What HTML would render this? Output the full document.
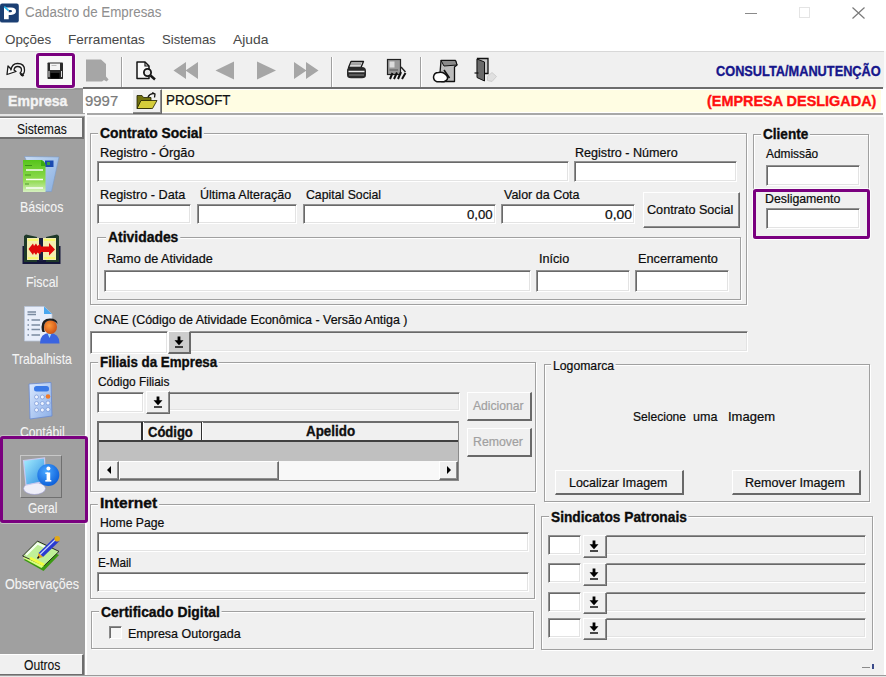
<!DOCTYPE html>
<html><head><meta charset="utf-8"><style>
html,body{margin:0;padding:0;}
body{width:886px;height:677px;overflow:hidden;position:relative;background:#fff;font-family:"Liberation Sans", sans-serif;}
body>div{position:absolute;}
.t{white-space:pre;transform-origin:0 0;-webkit-text-stroke:0.3px currentColor;}
.sk{box-sizing:border-box;border-top:1px solid #909090;border-left:1px solid #909090;border-right:1px solid #fff;border-bottom:1px solid #fff;box-shadow:inset 1px 1px #696969, inset -1px -1px #e3e3e3;}
.rs{box-sizing:border-box;border-top:1px solid #fff;border-left:1px solid #fff;border-right:1px solid #696969;border-bottom:1px solid #696969;box-shadow:inset -1px -1px #8e8e8e;}
.rs2{box-sizing:border-box;border-top:1px solid #fff;border-left:1px solid #fff;border-right:2px solid #696969;border-bottom:2px solid #696969;}
.gb{box-sizing:border-box;border:1px solid #a0a0a0;box-shadow:inset 1px 1px #fff, 1px 1px #fff;}
</style></head><body>
<div style="left:0px;top:0px;width:886px;height:51px;background:#fff"></div>
<div class="t" style="left:24.73px;top:6.07px;font-size:13.91px;line-height:13.91px;font-weight:400;color:#8f8f8f;transform:scaleX(0.9591);-webkit-text-stroke:0.05px #8f8f8f">Cadastro de Empresas</div>
<div style="left:745px;top:13px;width:12px;height:1.2px;background:#8a8a8a"></div>
<div style="left:799px;top:7px;width:11px;height:11px;border:1px solid #e4e4e4;box-sizing:border-box"></div>
<svg style="position:absolute;left:852px;top:7px" width="13" height="12" viewBox="0 0 13 12"><path d="M0.5 0.5 L12.5 11.5 M12.5 0.5 L0.5 11.5" stroke="#7a7a7a" stroke-width="1.2"/></svg>
<div class="t" style="left:5.26px;top:33.37px;font-size:13.33px;line-height:13.33px;font-weight:400;color:#4a4a4a;transform:scaleX(1.0041);-webkit-text-stroke:0.05px #4a4a4a">Opções</div>
<div class="t" style="left:68.01px;top:33.37px;font-size:13.33px;line-height:13.33px;font-weight:400;color:#4a4a4a;transform:scaleX(1.0174);-webkit-text-stroke:0.05px #4a4a4a">Ferramentas</div>
<div class="t" style="left:161.68px;top:33.37px;font-size:13.33px;line-height:13.33px;font-weight:400;color:#4a4a4a;transform:scaleX(0.9815);-webkit-text-stroke:0.05px #4a4a4a">Sistemas</div>
<div class="t" style="left:232.70px;top:33.37px;font-size:13.33px;line-height:13.33px;font-weight:400;color:#4a4a4a;transform:scaleX(1.0394);-webkit-text-stroke:0.05px #4a4a4a">Ajuda</div>
<div style="left:0px;top:51px;width:885px;height:37px;background:#f0f0f0;border-top:1px solid #d8d8d8;box-sizing:border-box"></div>
<div style="left:884px;top:51px;width:2px;height:37px;background:#fafafa"></div>
<div style="left:121px;top:57px;width:1px;height:30px;background:#a0a0a0;box-shadow:1px 0 #fff"></div>
<div style="left:331px;top:57px;width:1px;height:30px;background:#a0a0a0;box-shadow:1px 0 #fff"></div>
<div style="left:420px;top:57px;width:1px;height:30px;background:#a0a0a0;box-shadow:1px 0 #fff"></div>
<div class="t" style="left:715.89px;top:63.73px;font-size:14.20px;line-height:14.20px;font-weight:700;color:#16168c;transform:scaleX(0.8996);-webkit-text-stroke:0.35px #16168c">CONSULTA/MANUTENÇÃO</div>
<div style="left:0px;top:87.5px;width:883px;height:2.3px;background:#949494"></div>
<div style="left:0px;top:89.7px;width:83.5px;height:24.3px;background:#a0a0a0;border-right:1px solid #8a8a8a;box-sizing:border-box"></div>
<div class="t" style="left:8.36px;top:94.67px;font-size:13.91px;line-height:13.91px;font-weight:700;color:#f4f4f4;transform:scaleX(1.0114);-webkit-text-stroke:0.35px #f4f4f4">Empresa</div>
<div style="left:83px;top:87px;width:800px;height:28px;background:#fff;border-top:2px solid #6d6d6d;border-bottom:2px solid #a8a8a8;box-sizing:border-box"></div>
<div class="t" style="left:84.80px;top:94.31px;font-size:14.93px;line-height:14.93px;font-weight:400;color:#7a7a7a;transform:scaleX(0.9993);-webkit-text-stroke:0.22px #7a7a7a">9997</div>
<div class="rs" style="left:132px;top:89px;width:30px;height:25px;background:#f0f0f0"></div>
<div style="left:161.5px;top:89.8px;width:719px;height:22.6px;background:#fffde3"></div>
<div class="t" style="left:165.83px;top:93.23px;font-size:14.78px;line-height:14.78px;font-weight:400;color:#111;transform:scaleX(0.9034);-webkit-text-stroke:0.22px #111">PROSOFT</div>
<div class="t" style="left:707.12px;top:94.43px;font-size:14.20px;line-height:14.20px;font-weight:700;color:#ff1010;transform:scaleX(1.0168);-webkit-text-stroke:0.35px #ff1010">(EMPRESA DESLIGADA)</div>
<div style="left:0px;top:116px;width:85px;height:559px;background:#a0a0a0"></div>
<div style="left:0px;top:114px;width:85px;height:2px;background:#e6e6e6"></div>
<div style="left:85px;top:113px;width:2px;height:562px;background:#fff"></div>
<div style="left:0;top:117px;width:84px;height:22px;background:#f0f0f0;border-top:1px solid #7a7a7a;border-right:2px solid #6d6d6d;border-bottom:2px solid #6d6d6d;box-sizing:border-box;box-shadow:inset 0 1px #fff"></div>
<div class="t" style="left:16.72px;top:121.83px;font-size:14.20px;line-height:14.20px;font-weight:400;color:#111;transform:scaleX(0.8517);-webkit-text-stroke:0.1px #111">Sistemas</div>
<div style="left:0;top:654px;width:84px;height:21px;background:#f0f0f0;border-top:1px solid #fff;border-right:2px solid #6d6d6d;border-bottom:1px solid #6d6d6d;box-sizing:border-box"></div>
<div class="t" style="left:24.11px;top:658.13px;font-size:14.20px;line-height:14.20px;font-weight:400;color:#111;transform:scaleX(0.8552);-webkit-text-stroke:0.1px #111">Outros</div>
<div class="t" style="left:20.41px;top:199.83px;font-size:14.20px;line-height:14.20px;font-weight:400;color:#f4f4f4;transform:scaleX(0.8719);-webkit-text-stroke:0.1px #f4f4f4">Básicos</div>
<div class="t" style="left:26.01px;top:275.13px;font-size:14.20px;line-height:14.20px;font-weight:400;color:#f4f4f4;transform:scaleX(0.8726);-webkit-text-stroke:0.1px #f4f4f4">Fiscal</div>
<div class="t" style="left:11.66px;top:351.73px;font-size:14.20px;line-height:14.20px;font-weight:400;color:#f4f4f4;transform:scaleX(0.8590);-webkit-text-stroke:0.1px #f4f4f4">Trabalhista</div>
<div class="t" style="left:19.69px;top:425.33px;font-size:14.20px;line-height:14.20px;font-weight:400;color:#f4f4f4;transform:scaleX(0.8591);-webkit-text-stroke:0.1px #f4f4f4">Contábil</div>
<div class="t" style="left:27.70px;top:501.13px;font-size:14.20px;line-height:14.20px;font-weight:400;color:#f4f4f4;transform:scaleX(0.8450);-webkit-text-stroke:0.1px #f4f4f4">Geral</div>
<div class="t" style="left:5.20px;top:577.13px;font-size:14.20px;line-height:14.20px;font-weight:400;color:#f4f4f4;transform:scaleX(0.8865);-webkit-text-stroke:0.1px #f4f4f4">Observações</div>
<div style="left:87px;top:115px;width:797px;height:560px;background:#f0f0f0"></div>
<div style="left:87px;top:115px;width:797px;height:1.5px;background:#fafafa"></div>
<div style="left:0px;top:675px;width:886px;height:1px;background:#9a9a9a"></div>
<div style="left:0px;top:676px;width:886px;height:1px;background:#e8e8e8"></div>
<div class="gb" style="left:90px;top:133px;width:657px;height:172px"></div>
<div class="t" style="left:100.15px;top:126.00px;font-size:14.35px;line-height:14.35px;font-weight:700;color:#0c0c0c;transform:scaleX(0.9658);-webkit-text-stroke:0.35px #0c0c0c;background:#f0f0f0;box-shadow:-2px 0 #f0f0f0,1.5px 0 #f0f0f0">Contrato Social</div>
<div class="t" style="left:100.28px;top:145.99px;font-size:13.19px;line-height:13.19px;font-weight:400;color:#0c0c0c;transform:scaleX(0.9703);-webkit-text-stroke:0.22px #0c0c0c">Registro - Órgão</div>
<div class="sk" style="left:97px;top:161px;width:472px;height:21px;background:#fff"></div>
<div class="t" style="left:574.69px;top:146.19px;font-size:13.19px;line-height:13.19px;font-weight:400;color:#0c0c0c;transform:scaleX(0.9538);-webkit-text-stroke:0.22px #0c0c0c">Registro - Número</div>
<div class="sk" style="left:573.5px;top:161px;width:163.5px;height:21px;background:#fff"></div>
<div class="t" style="left:100.29px;top:188.49px;font-size:13.19px;line-height:13.19px;font-weight:400;color:#0c0c0c;transform:scaleX(0.9614);-webkit-text-stroke:0.22px #0c0c0c">Registro - Data</div>
<div class="sk" style="left:97px;top:203.5px;width:94px;height:20.5px;background:#fff"></div>
<div class="t" style="left:199.52px;top:188.49px;font-size:13.19px;line-height:13.19px;font-weight:400;color:#0c0c0c;transform:scaleX(0.9502);-webkit-text-stroke:0.22px #0c0c0c">Última Alteração</div>
<div class="sk" style="left:196.5px;top:203.5px;width:100.5px;height:20.5px;background:#fff"></div>
<div class="t" style="left:305.89px;top:188.49px;font-size:13.19px;line-height:13.19px;font-weight:400;color:#0c0c0c;transform:scaleX(0.9310);-webkit-text-stroke:0.22px #0c0c0c">Capital Social</div>
<div class="sk" style="left:302.5px;top:203.5px;width:193.0px;height:20.5px;background:#fff"></div>
<div class="t" style="left:466.70px;top:208.39px;font-size:13.19px;line-height:13.19px;font-weight:400;color:#0c0c0c;transform:scaleX(1.0002);-webkit-text-stroke:0.22px #0c0c0c">0,00</div>
<div class="t" style="left:504.40px;top:188.49px;font-size:13.19px;line-height:13.19px;font-weight:400;color:#0c0c0c;transform:scaleX(0.9484);-webkit-text-stroke:0.22px #0c0c0c">Valor da Cota</div>
<div class="sk" style="left:500.5px;top:203.5px;width:134.5px;height:20.5px;background:#fff"></div>
<div class="t" style="left:604.99px;top:208.39px;font-size:13.19px;line-height:13.19px;font-weight:400;color:#0c0c0c;transform:scaleX(1.0486);-webkit-text-stroke:0.22px #0c0c0c">0,00</div>
<div class="rs" style="left:642.5px;top:192px;width:97.5px;height:36px;background:#f0f0f0"></div>
<div class="t" style="left:646.77px;top:203.39px;font-size:13.19px;line-height:13.19px;font-weight:400;color:#0c0c0c;transform:scaleX(0.9573);-webkit-text-stroke:0.22px #0c0c0c">Contrato Social</div>
<div class="gb" style="left:97px;top:236.5px;width:644px;height:63.0px"></div>
<div class="t" style="left:107.72px;top:230.40px;font-size:14.35px;line-height:14.35px;font-weight:700;color:#0c0c0c;transform:scaleX(0.9700);-webkit-text-stroke:0.35px #0c0c0c;background:#f0f0f0;box-shadow:-2px 0 #f0f0f0,1.5px 0 #f0f0f0">Atividades</div>
<div class="t" style="left:106.99px;top:252.19px;font-size:13.19px;line-height:13.19px;font-weight:400;color:#0c0c0c;transform:scaleX(0.9563);-webkit-text-stroke:0.22px #0c0c0c">Ramo de Atividade</div>
<div class="sk" style="left:104px;top:269.5px;width:427px;height:22.5px;background:#fff"></div>
<div class="t" style="left:538.86px;top:251.79px;font-size:13.19px;line-height:13.19px;font-weight:400;color:#0c0c0c;transform:scaleX(0.9579);-webkit-text-stroke:0.22px #0c0c0c">Início</div>
<div class="sk" style="left:536px;top:269.5px;width:93.5px;height:22.5px;background:#fff"></div>
<div class="t" style="left:637.78px;top:251.79px;font-size:13.19px;line-height:13.19px;font-weight:400;color:#0c0c0c;transform:scaleX(0.9643);-webkit-text-stroke:0.22px #0c0c0c">Encerramento</div>
<div class="sk" style="left:635px;top:269.5px;width:93.5px;height:22.5px;background:#fff"></div>
<div class="gb" style="left:753px;top:134px;width:116px;height:105px"></div>
<div class="t" style="left:763.36px;top:127.40px;font-size:14.35px;line-height:14.35px;font-weight:700;color:#0c0c0c;transform:scaleX(0.9470);-webkit-text-stroke:0.35px #0c0c0c;background:#f0f0f0;box-shadow:-2px 0 #f0f0f0,1.5px 0 #f0f0f0">Cliente</div>
<div class="t" style="left:765.70px;top:146.79px;font-size:13.19px;line-height:13.19px;font-weight:400;color:#0c0c0c;transform:scaleX(0.9020);-webkit-text-stroke:0.22px #0c0c0c">Admissão</div>
<div class="sk" style="left:765.5px;top:165px;width:94.5px;height:21px;background:#fff"></div>
<div class="t" style="left:764.71px;top:191.99px;font-size:13.19px;line-height:13.19px;font-weight:400;color:#0c0c0c;transform:scaleX(0.9342);-webkit-text-stroke:0.22px #0c0c0c">Desligamento</div>
<div class="sk" style="left:765.5px;top:208px;width:94.5px;height:21px;background:#fff"></div>
<div class="t" style="left:93.78px;top:313.39px;font-size:13.19px;line-height:13.19px;font-weight:400;color:#0c0c0c;transform:scaleX(0.9441);-webkit-text-stroke:0.22px #0c0c0c">CNAE (Código de Atividade Econômica - Versão Antiga )</div>
<div class="sk" style="left:90px;top:331px;width:78px;height:22.5px;background:#fff"></div>
<div class="sk" style="left:189px;top:331px;width:559px;height:21px;background:#f0f0f0"></div>
<div class="rs2" style="left:167.5px;top:331px;width:23.5px;height:23px;background:#cdcdcd"></div>
<div class="gb" style="left:90px;top:361.5px;width:446px;height:130.5px"></div>
<div class="t" style="left:99.90px;top:354.80px;font-size:14.35px;line-height:14.35px;font-weight:700;color:#0c0c0c;transform:scaleX(0.9303);-webkit-text-stroke:0.35px #0c0c0c;background:#f0f0f0;box-shadow:-2px 0 #f0f0f0,1.5px 0 #f0f0f0">Filiais da Empresa</div>
<div class="t" style="left:98.30px;top:374.69px;font-size:13.19px;line-height:13.19px;font-weight:400;color:#0c0c0c;transform:scaleX(0.9026);-webkit-text-stroke:0.22px #0c0c0c">Código Filiais</div>
<div class="sk" style="left:97px;top:392px;width:46.5px;height:20.5px;background:#fff"></div>
<div class="sk" style="left:168px;top:392px;width:292px;height:18.5px;background:#f0f0f0"></div>
<div class="rs" style="left:146px;top:391px;width:23.80000000000001px;height:23px;background:#f0f0f0"></div>
<div style="left:97px;top:420.5px;width:362px;height:60.5px;border:1px solid #8a8a8a;border-top:2px solid #6d6d6d;border-left:2px solid #6d6d6d;box-sizing:border-box;background:#f0f0f0"></div>
<div style="left:99px;top:440px;width:359px;height:21px;background:#c0c0c0;border-top:2px solid #404040;box-sizing:border-box"></div>
<div style="left:141px;top:422px;width:1.5px;height:18px;background:#303030;box-shadow:1px 0 #fff"></div>
<div style="left:200.5px;top:422px;width:1.5px;height:18px;background:#303030;box-shadow:1px 0 #fff"></div>
<div class="t" style="left:148.48px;top:424.80px;font-size:14.35px;line-height:14.35px;font-weight:700;color:#111;transform:scaleX(0.9072);-webkit-text-stroke:0.35px #111">Código</div>
<div class="t" style="left:305.83px;top:424.40px;font-size:14.35px;line-height:14.35px;font-weight:700;color:#111;transform:scaleX(0.9330);-webkit-text-stroke:0.35px #111">Apelido</div>
<div style="left:99px;top:461px;width:358px;height:19px;background:#f8f8f8"></div>
<div class="rs" style="left:99px;top:461px;width:20px;height:19px;background:#f0f0f0"></div>
<div class="rs" style="left:119px;top:461px;width:160px;height:19px;background:#f0f0f0"></div>
<div class="rs" style="left:438.5px;top:461px;width:19.5px;height:19px;background:#f0f0f0"></div>
<svg style="position:absolute;left:104px;top:464px" width="10" height="12"><path d="M7 2 L3 6 L7 10 Z" fill="#000"/></svg>
<svg style="position:absolute;left:444px;top:464px" width="10" height="12"><path d="M3 2 L7 6 L3 10 Z" fill="#000"/></svg>
<div class="rs2" style="left:467px;top:392px;width:64.5px;height:29px;background:#f0f0f0"></div>
<div class="t" style="left:473.20px;top:399.19px;font-size:13.19px;line-height:13.19px;font-weight:400;color:#a0a0a0;transform:scaleX(0.9195);-webkit-text-stroke:0.22px #a0a0a0">Adicionar</div>
<div class="rs2" style="left:467px;top:427.5px;width:64.5px;height:29.0px;background:#f0f0f0"></div>
<div class="t" style="left:472.72px;top:434.79px;font-size:13.19px;line-height:13.19px;font-weight:400;color:#a0a0a0;transform:scaleX(0.9335);-webkit-text-stroke:0.22px #a0a0a0">Remover</div>
<div class="gb" style="left:544px;top:364px;width:326px;height:138px"></div>
<div class="t" style="left:553.22px;top:358.99px;font-size:13.19px;line-height:13.19px;font-weight:400;color:#0c0c0c;transform:scaleX(0.9265);-webkit-text-stroke:0.22px #0c0c0c;background:#f0f0f0;box-shadow:-2px 0 #f0f0f0,1.5px 0 #f0f0f0">Logomarca</div>
<div class="t" style="left:632.52px;top:410.49px;font-size:13.19px;line-height:13.19px;font-weight:400;color:#0c0c0c;transform:scaleX(0.9153);-webkit-text-stroke:0.22px #0c0c0c">Selecione</div>
<div class="t" style="left:692.65px;top:410.49px;font-size:13.19px;line-height:13.19px;font-weight:400;color:#0c0c0c;transform:scaleX(0.9512);-webkit-text-stroke:0.22px #0c0c0c">uma</div>
<div class="t" style="left:727.73px;top:410.49px;font-size:13.19px;line-height:13.19px;font-weight:400;color:#0c0c0c;transform:scaleX(0.9864);-webkit-text-stroke:0.22px #0c0c0c">Imagem</div>
<div class="rs2" style="left:554.5px;top:469.7px;width:129.5px;height:25.80000000000001px;background:#f0f0f0"></div>
<div class="t" style="left:569.00px;top:475.89px;font-size:13.19px;line-height:13.19px;font-weight:400;color:#0c0c0c;transform:scaleX(0.9452);-webkit-text-stroke:0.22px #0c0c0c">Localizar Imagem</div>
<div class="rs2" style="left:731.5px;top:469.7px;width:129.5px;height:25.80000000000001px;background:#f0f0f0"></div>
<div class="t" style="left:745.49px;top:475.89px;font-size:13.19px;line-height:13.19px;font-weight:400;color:#0c0c0c;transform:scaleX(0.9551);-webkit-text-stroke:0.22px #0c0c0c">Remover Imagem</div>
<div class="gb" style="left:90px;top:503.5px;width:445px;height:95.5px"></div>
<div class="t" style="left:99.87px;top:496.30px;font-size:14.35px;line-height:14.35px;font-weight:700;color:#0c0c0c;transform:scaleX(1.0849);-webkit-text-stroke:0.35px #0c0c0c;background:#f0f0f0;box-shadow:-2px 0 #f0f0f0,1.5px 0 #f0f0f0">Internet</div>
<div class="t" style="left:100.03px;top:516.49px;font-size:13.19px;line-height:13.19px;font-weight:400;color:#0c0c0c;transform:scaleX(0.9235);-webkit-text-stroke:0.22px #0c0c0c">Home Page</div>
<div class="sk" style="left:97px;top:531.5px;width:432px;height:20.5px;background:#fff"></div>
<div class="t" style="left:98.06px;top:555.99px;font-size:13.19px;line-height:13.19px;font-weight:400;color:#0c0c0c;transform:scaleX(0.8875);-webkit-text-stroke:0.22px #0c0c0c">E-Mail</div>
<div class="sk" style="left:97px;top:572px;width:432px;height:20px;background:#fff"></div>
<div class="gb" style="left:91px;top:611px;width:443px;height:37.5px"></div>
<div class="t" style="left:101.24px;top:604.70px;font-size:14.35px;line-height:14.35px;font-weight:700;color:#0c0c0c;transform:scaleX(0.9685);-webkit-text-stroke:0.35px #0c0c0c;background:#f0f0f0;box-shadow:-2px 0 #f0f0f0,1.5px 0 #f0f0f0">Certificado Digital</div>
<div style="left:109px;top:626px;width:13px;height:13px;box-sizing:border-box;border-top:1px solid #8a8a8a;border-left:1px solid #8a8a8a;border-right:1px solid #fff;border-bottom:1px solid #fff;box-shadow:inset 1px 1px #6d6d6d;background:#f6f6f6"></div>
<div class="t" style="left:128.30px;top:626.99px;font-size:13.19px;line-height:13.19px;font-weight:400;color:#0c0c0c;transform:scaleX(0.9486);-webkit-text-stroke:0.22px #0c0c0c">Empresa Outorgada</div>
<div class="gb" style="left:540.5px;top:516px;width:332.0px;height:133.5px"></div>
<div class="t" style="left:551.13px;top:509.60px;font-size:14.35px;line-height:14.35px;font-weight:700;color:#0c0c0c;transform:scaleX(0.9574);-webkit-text-stroke:0.35px #0c0c0c;background:#f0f0f0;box-shadow:-2px 0 #f0f0f0,1.5px 0 #f0f0f0">Sindicatos Patronais</div>
<div class="sk" style="left:548px;top:535px;width:33px;height:20px;background:#fff"></div>
<div class="sk" style="left:605px;top:535px;width:261px;height:20px;background:#f0f0f0"></div>
<div class="rs" style="left:582.5px;top:535px;width:24.799999999999955px;height:23px;background:#f0f0f0"></div>
<div class="sk" style="left:548px;top:563px;width:33px;height:20px;background:#fff"></div>
<div class="sk" style="left:605px;top:563px;width:261px;height:20px;background:#f0f0f0"></div>
<div class="rs" style="left:582.5px;top:563px;width:24.799999999999955px;height:23px;background:#f0f0f0"></div>
<div class="sk" style="left:548px;top:591.5px;width:33px;height:20.0px;background:#fff"></div>
<div class="sk" style="left:605px;top:591.5px;width:261px;height:20.0px;background:#f0f0f0"></div>
<div class="rs" style="left:582.5px;top:591.5px;width:24.799999999999955px;height:22.5px;background:#f0f0f0"></div>
<div class="sk" style="left:548px;top:617.5px;width:33px;height:20.0px;background:#fff"></div>
<div class="sk" style="left:605px;top:617.5px;width:261px;height:20.0px;background:#f0f0f0"></div>
<div class="rs" style="left:582.5px;top:617.5px;width:24.799999999999955px;height:22.5px;background:#f0f0f0"></div>
<div style="left:862px;top:667px;width:8px;height:1px;background:#8a8a8a"></div>
<div style="left:872px;top:664px;width:2px;height:5px;background:#3b4a8a"></div>
<svg style="position:absolute;left:174px;top:336px" width="10" height="12" viewBox="0 0 10 12"><path d="M3.6 0.6 H6.4 V4.2 H9.5 L5 9.2 L0.5 4.2 H3.6 Z" fill="#000"/><rect x="1" y="10.3" width="8" height="1.4" fill="#000"/></svg>
<svg style="position:absolute;left:152.5px;top:396px" width="10" height="12" viewBox="0 0 10 12"><path d="M3.6 0.6 H6.4 V4.2 H9.5 L5 9.2 L0.5 4.2 H3.6 Z" fill="#000"/><rect x="1" y="10.3" width="8" height="1.4" fill="#000"/></svg>
<svg style="position:absolute;left:589px;top:539.8px" width="10" height="12" viewBox="0 0 10 12"><path d="M3.6 0.6 H6.4 V4.2 H9.5 L5 9.2 L0.5 4.2 H3.6 Z" fill="#000"/><rect x="1" y="10.3" width="8" height="1.4" fill="#000"/></svg>
<svg style="position:absolute;left:589px;top:567.8px" width="10" height="12" viewBox="0 0 10 12"><path d="M3.6 0.6 H6.4 V4.2 H9.5 L5 9.2 L0.5 4.2 H3.6 Z" fill="#000"/><rect x="1" y="10.3" width="8" height="1.4" fill="#000"/></svg>
<svg style="position:absolute;left:589px;top:596.3px" width="10" height="12" viewBox="0 0 10 12"><path d="M3.6 0.6 H6.4 V4.2 H9.5 L5 9.2 L0.5 4.2 H3.6 Z" fill="#000"/><rect x="1" y="10.3" width="8" height="1.4" fill="#000"/></svg>
<svg style="position:absolute;left:589px;top:622.3px" width="10" height="12" viewBox="0 0 10 12"><path d="M3.6 0.6 H6.4 V4.2 H9.5 L5 9.2 L0.5 4.2 H3.6 Z" fill="#000"/><rect x="1" y="10.3" width="8" height="1.4" fill="#000"/></svg>
<div style="left:35.5px;top:53.3px;width:39px;height:34.3px;border:3.8px solid #7a007f;border-radius:3px;box-sizing:border-box;background:#f8f8f8;box-shadow:0 0 0 1px rgba(255,255,255,.6)"></div>
<div style="left:-0.5px;top:436.3px;width:88px;height:87.2px;border:3.5px solid #7a007f;border-radius:3px;box-sizing:border-box;box-shadow:0 0 0 1px rgba(255,255,255,.35)"></div>
<div style="left:752.5px;top:189px;width:117.3px;height:49.5px;border:3.8px solid #7a007f;border-radius:3px;box-sizing:border-box;box-shadow:0 0 0 1px rgba(255,255,255,.8)"></div>
<div style="left:20px;top:455px;width:42px;height:43px;box-sizing:border-box;border-top:1px solid #c8c8c8;border-left:1px solid #c8c8c8;border-right:1px solid #707070;border-bottom:1px solid #707070"></div>
<svg style="position:absolute;left:0;top:0" width="886" height="677" viewBox="0 0 886 677">
<defs>
<linearGradient id="gg" x1="0" y1="0" x2="0" y2="1"><stop offset="0" stop-color="#56c41a"/><stop offset="0.65" stop-color="#92dc52"/><stop offset="1" stop-color="#d6f0c0"/></linearGradient>
<linearGradient id="bg1" x1="0" y1="0" x2="1" y2="1"><stop offset="0" stop-color="#c8dcf4"/><stop offset="1" stop-color="#88aee0"/></linearGradient>
<linearGradient id="scr" x1="0" y1="0" x2="1" y2="1"><stop offset="0" stop-color="#a8f0ff"/><stop offset="1" stop-color="#2a8ae0"/></linearGradient>
<linearGradient id="calc" x1="0" y1="0" x2="1" y2="1"><stop offset="0" stop-color="#dceaff"/><stop offset="1" stop-color="#8aaee8"/></linearGradient>
<radialGradient id="info" cx="0.4" cy="0.35" r="0.7"><stop offset="0" stop-color="#4aa8ff"/><stop offset="1" stop-color="#0a5cd8"/></radialGradient>
<radialGradient id="head" cx="0.4" cy="0.4" r="0.7"><stop offset="0" stop-color="#ff9a3a"/><stop offset="1" stop-color="#c84a10"/></radialGradient>
</defs>
<!-- Basicos -->
<path d="M24.5 156.5 L59 157 L51.5 191.5 L40 191.5 Z" fill="url(#bg1)" stroke="#7a9ac8" stroke-width="0.6"/>
<rect x="45" y="160.5" width="8.5" height="6.5" fill="#1a4ab0"/>
<rect x="47" y="162" width="3" height="3" fill="#3a9a4a"/>
<path d="M23 160 H41 Q45 161 45.5 166 V192 H23 Z" fill="url(#gg)"/>
<path d="M41 160 Q45 161 45.5 166 L41 166 Z" fill="#3aaa10"/>
<path d="M26 170 H43 M26 179.5 H43 M26 188 H43" stroke="#fff" stroke-width="1.6" opacity="0.95"/>
<path d="M25 165.5 H32 M25 175 H31 M25 184 H29" stroke="#2a7a10" stroke-width="1.2" opacity="0.7"/>
<!-- Fiscal -->
<rect x="22.5" y="246" width="38" height="18" fill="#14163a"/>
<path d="M24 236 L26 234.5 L37 237 L37 262 L24 262 Z" fill="#1f3a2a"/>
<path d="M46 237 L57 234.5 L59 236 L59 262 L46 262 Z" fill="#1f3a2a"/>
<path d="M27 238 H39 V260 H27 Z" fill="#f4eeb0"/>
<path d="M43 238 H56 V260 H43 Z" fill="#f4eeb0"/>
<rect x="39" y="238" width="4" height="23" fill="#1a1e40"/>
<path d="M28 240 H38 M44 240 H55 M28 258 H38 M44 258 H55" stroke="#f8f870" stroke-width="2"/>
<path d="M28.5 249 L33 243.5 L34 246 L36 243.5 L37.5 246 L40 244 L41 246.5 L49 246.5 L49 243 L55 249.5 L49 255.5 L49 252 L41 252 L40 254.5 L37.5 252.5 L36 255 L34 252.5 L33 255 Z" fill="#e00808"/>
<!-- Trabalhista -->
<path d="M24.5 306.5 H44 L52 314 V341 H24.5 Z" fill="#e8eefa" stroke="#b8c4d8" stroke-width="0.8"/>
<path d="M44 306.5 V314 H52 Z" fill="#4aa8f0"/>
<path d="M27.5 312 H36 M27.5 314.5 H36" stroke="#7a8aa0" stroke-width="1.3"/>
<path d="M27.5 320 H29 M31.5 320 H40 M27.5 325 H29 M31.5 325 H40 M27.5 329.5 H29 M31.5 329.5 H40 M27.5 335 H29 M31.5 335 H40" stroke="#7a8aa0" stroke-width="1.4"/>
<path d="M40 343.5 Q40 333 49.5 333 Q59.5 333 59.5 343.5 Z" fill="#3a64e0"/>
<path d="M47.5 333.5 L49.5 338 L51.5 333.5 Z" fill="#a8e0ff"/>
<ellipse cx="50.5" cy="327" rx="6.5" ry="7" fill="url(#head)"/>
<path d="M41.5 327 Q41.5 318.5 50 318.5 Q57.5 318.5 57.5 324 Q55 320.5 50 320.5 Q44.5 320.5 44 327 Q44 331 45 332 L42.5 332 Q41.5 330 41.5 327Z" fill="#1e1e1e"/>
<!-- Contabil -->
<path d="M29 384 L51 382.5 L52 416 L30 419 Z" fill="url(#calc)" stroke="#6a8ad0" stroke-width="0.8"/>
<rect x="34" y="386" width="15" height="5.5" rx="2.5" fill="#3a7ae8"/>
<g fill="#eef4ff" stroke="#6a8ad0" stroke-width="0.6">
<circle cx="36.5" cy="397" r="2"/><circle cx="42.3" cy="397" r="2"/>
<circle cx="36.5" cy="403.5" r="2"/><circle cx="42.3" cy="403.5" r="2"/><circle cx="48" cy="403" r="2"/>
<circle cx="36.5" cy="410" r="2"/><circle cx="42.3" cy="410" r="2"/><circle cx="48" cy="409.5" r="2"/>
</g>
<circle cx="48" cy="396.5" r="2.3" fill="#f07a2a"/>
<!-- Geral -->
<ellipse cx="34.5" cy="488.5" rx="11" ry="6" fill="#eeeef8" stroke="#9a9ad0" stroke-width="0.6"/>
<path d="M23.5 460.5 L44.5 458 L45.5 481 L26 485 Z" fill="url(#scr)" stroke="#c8c8f0" stroke-width="1.2"/>
<circle cx="48.3" cy="475" r="11" fill="url(#info)"/>
<rect x="46.6" y="472.5" width="3.6" height="8.5" fill="#fff"/>
<rect x="45.3" y="480" width="6" height="1.6" fill="#fff"/>
<rect x="45.3" y="472.5" width="3" height="1.4" fill="#fff"/>
<circle cx="48.4" cy="468.5" r="2" fill="#fff"/>
<!-- Observacoes -->
<path d="M24 560 L38.5 545 L59 555 L43.5 571 Z" fill="#3a9a10"/>
<path d="M23 558 L38 543 L57 552.5 L41.5 568 Z" fill="#d8ff80"/>
<path d="M22.6 556 L37.5 541.1 L59 551.4 L44.2 565.6 Z" fill="#c0f098" stroke="#1a1a1a" stroke-width="0.9"/>
<path d="M26 555 L37.5 543.5 L46 547.5" stroke="#f4fff0" stroke-width="2.2" fill="none"/>
<path d="M30 558 L44 565" stroke="#f0ff40" stroke-width="3"/>
<path d="M38.5 553 L55 537 L59.5 541 L43 557 Z" fill="#2a3ad0"/>
<path d="M40 554.5 L56.5 538.5" stroke="#c8d8ff" stroke-width="1.1"/>
<circle cx="57.2" cy="538.8" r="2.8" fill="#e0a818"/>
<path d="M38.5 553 L43 557 L37.5 558.5 Z" fill="#e8a820"/>
<path d="M37.5 558.5 L39 556.5" stroke="#111" stroke-width="1.4"/>
</svg>
<svg style="position:absolute;left:0;top:0" width="886" height="677" viewBox="0 0 886 677">
<!-- logo -->
<rect x="0" y="3.6" width="18.8" height="19" rx="2.2" fill="#1b3f73"/>
<path d="M4 7.4 H11 Q16 7.4 16 11.1 Q16 14.9 11 14.9 H8.7 V19.3 H4 Z M8.7 10.1 V12.3 H10.6 Q12 12.3 12 11.2 Q12 10.1 10.6 10.1 Z" fill="#fff" fill-rule="evenodd"/>
<path d="M4.3 6.6 L8.6 10.7" stroke="#27b8ee" stroke-width="1.7"/>
<!-- undo -->
<path d="M11 70 Q12 63.5 17.5 63.5 Q24.5 63.5 24.5 70 Q24.5 74 21.5 75.5 L20 73 Q21.5 72 21.5 70 Q21.5 66.5 17.5 66.5 Q14.5 66.5 14 70 L16 71.5 L7 74.5 L8 66 L10.5 68.5 Z" fill="#fafafa" stroke="#1a1a1a" stroke-width="1.3" stroke-linejoin="round"/>
<path d="M21 73.5 L23.5 76" stroke="#1a1a1a" stroke-width="2.2"/>
<!-- save -->
<rect x="47.5" y="62.5" width="15.5" height="16.5" rx="0.8" fill="#2a2a2a"/>
<rect x="50" y="63.5" width="10" height="6.5" fill="#f4f4f4"/>
<rect x="51.5" y="65" width="5" height="1" fill="#bbb"/>
<rect x="50.5" y="73" width="9" height="5.5" fill="#000"/>
<rect x="48.5" y="71" width="1" height="6" fill="#ddd"/>
<rect x="61" y="71" width="1" height="6" fill="#ddd"/>
<!-- disabled doc -->
<path d="M86 59.5 H101 L106 64 V76.5 L108.6 79.5 L106.5 81.6 L104 80 L102 81.6 L86 81.6 Z" fill="#a6a6a6"/>
<!-- preview -->
<path d="M137 62 H145 L149 66 V78.5 H137 Z" fill="#fafafa" stroke="#151515" stroke-width="1.5" stroke-linejoin="round"/>
<path d="M145 62 V66 H149" fill="none" stroke="#151515" stroke-width="1.2"/>
<circle cx="147.5" cy="72.5" r="3.6" fill="#e8e8e8" stroke="#151515" stroke-width="1.8"/>
<path d="M150.5 75.5 L155 79.5" stroke="#151515" stroke-width="2.4"/>
<!-- nav arrows -->
<g fill="#a6a6a6">
<path d="M173.5 70.5 L186 62 V79 Z M185.5 70.5 L198 62 V79 Z"/>
<path d="M215.5 70.5 L234 61.5 V79.5 Z"/>
<path d="M257 61.5 L276 70.5 L257 79.5 Z"/>
<path d="M294 62 L306.5 70.5 L294 79 Z M306 62 L318.5 70.5 L306 79 Z"/>
</g>
<!-- printer -->
<path d="M351 61.5 H363.5 L361 67.5 H348.5 Z" fill="#d8d8d8" stroke="#1a1a1a" stroke-width="1.3" stroke-linejoin="round"/>
<path d="M350 64 H361" stroke="#555" stroke-width="0.8"/>
<path d="M347 70.5 Q347 67 351 67 H362 Q366 67 366 71 V75 Q366 78.3 362 78.3 H351 Q347 78.3 347 75 Z" fill="#2a2a2a"/>
<path d="M348.5 71.5 H364.5" stroke="#e8e8e8" stroke-width="1.5"/>
<path d="M349 75 H364" stroke="#888" stroke-width="1"/>
<!-- report -->
<rect x="387.5" y="59.5" width="13" height="15" fill="#9a9a9a" stroke="#222" stroke-width="1.2"/>
<rect x="389.5" y="61.5" width="5" height="6" fill="#dcdcdc"/>
<path d="M389.5 70 H398" stroke="#555" stroke-width="1"/>
<path d="M390 79 L392.5 73 M394 79 L397 72.5 M398 79 L401 72 M402 79 L405.5 73" stroke="#111" stroke-width="2"/>
<path d="M401 67 L405.5 72" stroke="#222" stroke-width="1.4"/>
<!-- scroll -->
<path d="M441 60.5 H455.5 L457 65 L454.5 67 V81.5 H441.5 L440 73 Z" fill="#bcbcbc" stroke="#111" stroke-width="1.3" stroke-linejoin="round"/>
<path d="M441 60.5 H455.5 L457 65 L444 66 Z" fill="#8a8a8a" stroke="#111" stroke-width="1"/>
<path d="M433.5 77 Q434 72.5 438.5 72.5 Q443.5 71 447 76 Q449 80 444 81.8 H437 Q433.5 80.5 433.5 77 Z" fill="#ffffff" stroke="#111" stroke-width="1.5"/>
<path d="M444 70 L449.5 78" stroke="#111" stroke-width="1.6"/>
<!-- door -->
<path d="M477.5 58.5 H488 V73.5 H477.5 Z" fill="#c8c8c8" stroke="#111" stroke-width="1.3"/>
<path d="M477 59 L484.5 62 V81 L477 77.5 Z" fill="#6a6a6a" stroke="#111" stroke-width="1"/>
<path d="M474.5 73 L478.5 73" stroke="#111" stroke-width="1.2"/>
<path d="M487.5 76.5 L492 72.5 L496.5 76.5 L492 81.5 L487.5 80.5 Z" fill="#e0e0e0" stroke="#c8c8c8" stroke-width="0.8"/>
<!-- folder -->
<path d="M137 95.5 H142 L143.5 97.5 H151 V108.5 H137 Z" fill="#70700e" stroke="#202000" stroke-width="0.8"/>
<path d="M137 108.5 L141 100.5 H157 L152.5 108.5 Z" fill="#d4cc3a" stroke="#202000" stroke-width="0.8"/>
<path d="M148 97 Q150.5 92.5 155 94 L154.5 97.5 M155 94 L152.3 92.5" stroke="#111" stroke-width="1.3" fill="none"/>
</svg>
</body></html>
